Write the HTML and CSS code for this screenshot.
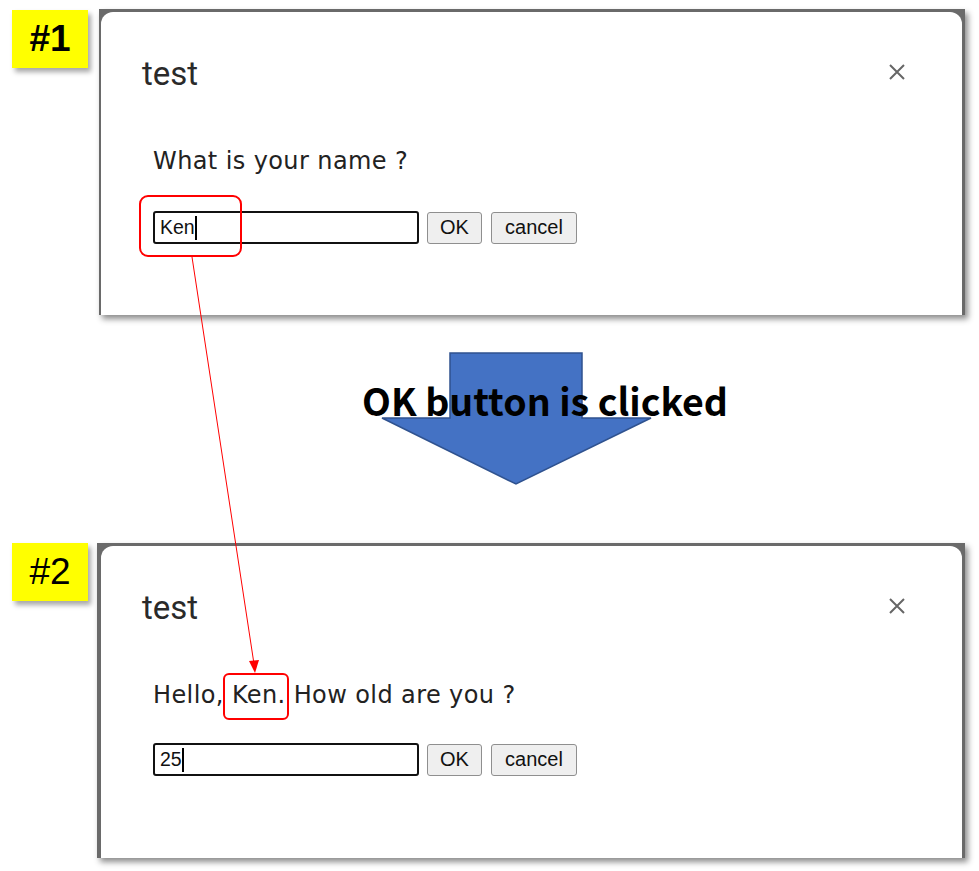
FILE: index.html
```html
<!DOCTYPE html>
<html lang="en">
<head>
  <meta charset="UTF-8" />
  <title>prompt dialog — OK button is clicked</title>
  <link rel="stylesheet" href="styles.css">
</head>
<body>

<div class="page">

  <div class="step step-first">
    <div class="tag tag-bold">#1</div>
    <div class="dialog">
      <div class="sheet">
        <div class="sheet-head">
          <h2 class="sheet-title">test</h2>
          <svg class="close" width="18" height="18" viewBox="0 0 18 18">
            <path d="M2 2 L16 16 M16 2 L2 16" stroke="#666" stroke-width="2" fill="none" />
          </svg>
        </div>
        <div class="sheet-body">
          <p class="question">What is your name ?</p>
          <div class="form-row">
            <div class="field marked">Ken<span class="caret"></span></div>
            <button class="btn btn-ok">OK</button>
            <button class="btn btn-cancel">cancel</button>
          </div>
        </div>
      </div>
    </div>
  </div>

  <div class="transition">
    <svg class="big-arrow" width="274" height="136" viewBox="0 0 274 136">
      <polygon points="70,1 202,1 202,66 271,66 136,132 2,66 70,66"
               fill="#4472c4" stroke="#2f528f" stroke-width="1.5" />
    </svg>
    <div class="transition-text">OK button is clicked</div>
  </div>

  <div class="step step-second">
    <div class="tag">#2</div>
    <div class="dialog">
      <div class="sheet">
        <div class="sheet-head">
          <h2 class="sheet-title">test</h2>
          <svg class="close" width="18" height="18" viewBox="0 0 18 18">
            <path d="M2 2 L16 16 M16 2 L2 16" stroke="#666" stroke-width="2" fill="none" />
          </svg>
        </div>
        <div class="sheet-body">
          <p class="question">Hello, <span class="name-mark">Ken.</span> How old are you ?</p>
          <div class="form-row">
            <div class="field">25<span class="caret"></span></div>
            <button class="btn btn-ok">OK</button>
            <button class="btn btn-cancel">cancel</button>
          </div>
        </div>
      </div>
    </div>
  </div>

  <!-- red pointer from the input of #1 to the name shown in #2 -->
  <svg class="pointer" width="979" height="871" viewBox="0 0 979 871">
    <line x1="192" y1="257" x2="254" y2="664" stroke="#ff0000" stroke-width="1" />
    <polygon points="249,661 259,660 255,673" fill="#ff0000" />
  </svg>

</div>

</body>
</html>
```

FILE: styles.css
```css
html, body {
  margin: 0; padding: 0;
  background: #fff;
  font-family: "Liberation Sans", Arial, sans-serif;
}
.page {
  position: relative;
  width: 979px;
  height: 871px;
  padding-top: 9px;
  box-sizing: border-box;
  overflow: hidden;
}
.step {
  display: flex;
  align-items: flex-start;
}
.tag {
  width: 76px;
  height: 58px;
  margin-left: 12px;
  margin-top: 1px;
  background: #ffff00;
  box-shadow: 3px 4px 5px rgba(0, 0, 0, 0.35);
  display: flex;
  align-items: center;
  justify-content: center;
  font-size: 37px;
  color: #000;
}
.tag-bold { font-weight: bold; }
.step-second .tag { margin-top: 0; }

.dialog {
  width: 866px;
  height: 306px;
  margin-left: 11px;
  background: #6a6a6a;
  padding: 3px 3px 0 2px;
  box-sizing: border-box;
  box-shadow: 3px 4px 6px rgba(0, 0, 0, 0.45);
  display: flex;
}
.step-second .dialog {
  width: 868px;
  height: 315px;
  margin-left: 9px;
  padding-left: 4px;
}
.sheet {
  flex: 1;
  background: #fff;
  border-radius: 12px 12px 0 0;
}
.sheet-head {
  display: flex;
  justify-content: space-between;
  align-items: flex-start;
  padding: 42px 56px 0 41px;
}
.sheet-title {
  margin: 0;
  font-family: Roboto, "Liberation Sans", sans-serif;
  font-weight: normal;
  font-size: 33px;
  line-height: 40px;
  color: #2a2a2a;
}
.close { margin-top: 9px; }

.sheet-body {
  padding: 52px 0 0 52px;
}
.question {
  margin: 0;
  font-family: "DejaVu Sans", sans-serif;
  font-size: 24px;
  letter-spacing: 0.4px;
  line-height: 30px;
  color: #222;
}
.name-mark {
  position: relative;
}
.name-mark::after {
  content: "";
  position: absolute;
  left: -9px;
  right: -3px;
  top: -8px;
  bottom: -11px;
  border: 2px solid #ff0000;
  border-radius: 6px;
}
.form-row {
  display: flex;
  align-items: center;
  gap: 8px;
  margin-top: 35px;
}
.step-second .form-row { margin-top: 33px; }
.field {
  position: relative;
  width: 266px;
  height: 33px;
  box-sizing: border-box;
  border: 2px solid #111;
  border-radius: 3px;
  padding: 0 5px;
  display: flex;
  align-items: center;
  font-size: 19.5px;
  color: #111;
}
.caret {
  display: inline-block;
  width: 2px;
  height: 24px;
  background: #000;
}
.marked::after {
  content: "";
  position: absolute;
  left: -16px;
  top: -18px;
  width: 99px;
  height: 58px;
  border: 2px solid #ff0000;
  border-radius: 9px;
}
.btn {
  height: 32px;
  padding: 0;
  border: 1px solid #8f8f8f;
  border-radius: 3px;
  background: #efefef;
  color: #111;
  font-family: "Liberation Sans", Arial, sans-serif;
  font-size: 20px;
}
.btn-ok { width: 55px; }
.btn-cancel { width: 86px; margin-left: 1px; }

.transition {
  position: relative;
  height: 228px;
  padding-top: 37px;
  box-sizing: border-box;
}
.big-arrow {
  display: block;
  margin-left: 380px;
}
.transition-text {
  position: absolute;
  left: 340px;
  top: 65px;
  width: 410px;
  text-align: center;
  font-family: "Noto Sans CJK JP", "Noto Sans", sans-serif;
  font-weight: bold;
  font-size: 37.5px;
  line-height: 40px;
  color: #000;
}
.pointer {
  position: absolute;
  left: 0;
  top: 0;
  pointer-events: none;
}
```
